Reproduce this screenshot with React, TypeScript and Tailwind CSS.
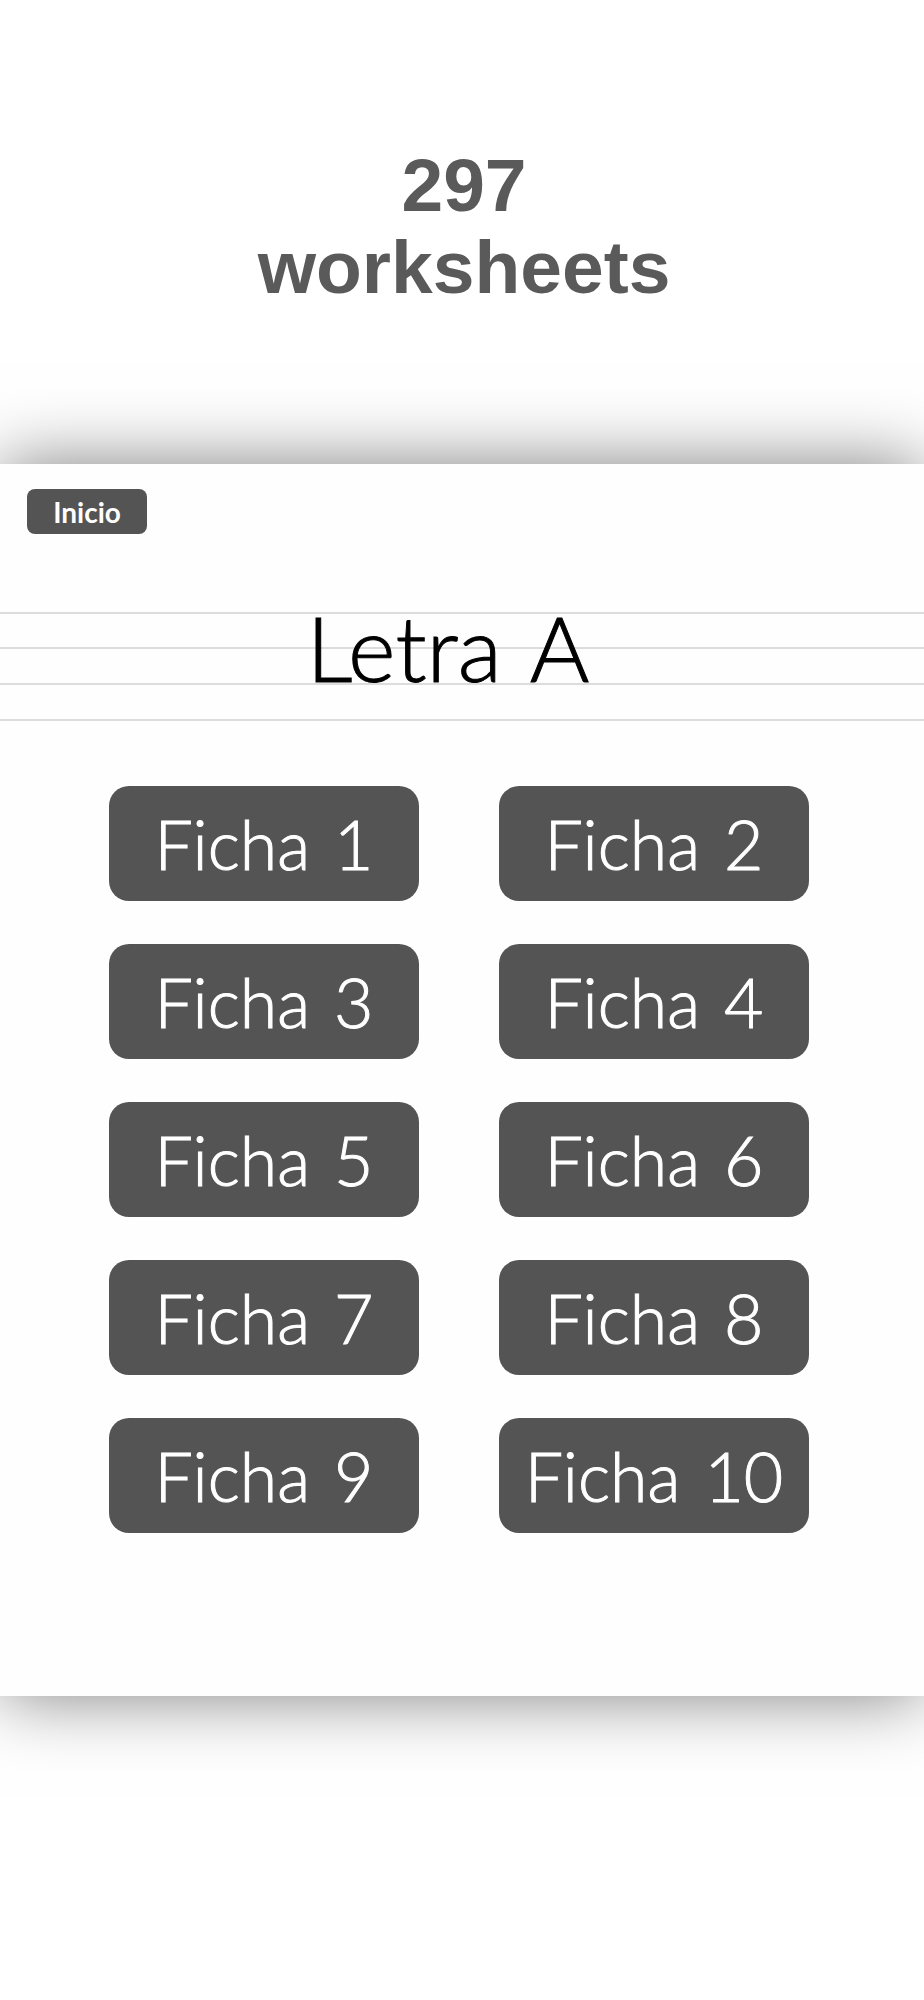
const WORKSHEETS = Array.from({ length: 10 }, (_, i) => i + 1);

function WorksheetLink({ number }: { number: number }) {
  return (
    <a
      href={`#ficha-${number}`}
      className="flex h-[115px] items-center justify-center gap-6 rounded-[20px] bg-[#545454] text-[68px] leading-none font-light text-white [-webkit-text-stroke:1px_white]"
    >
      <span>Ficha</span>
      <span>{number}</span>
    </a>
  );
}

export default function App() {
  return (
    <div className="min-h-screen overflow-hidden bg-white">
      <header className="pt-36 pb-[156px] pl-1 text-center font-['Liberation_Sans',sans-serif] text-[75px] leading-[82px] font-bold text-[#5a5a5a]">
        <h1>
          297
          <br />
          worksheets
        </h1>
      </header>

      <main className="bg-[#fefefe] pb-[163px] font-[Lato,sans-serif] shadow-[0_0_68px_rgba(0,0,0,0.5)]">
        <nav className="px-[27px] pt-[25px]">
          <a
            href="#inicio"
            className="flex h-[45px] w-[120px] items-center justify-center rounded-lg bg-[#545454] text-[28px] leading-none font-bold text-white"
          >
            Inicio
          </a>
        </nav>

        {/* ruled writing lines behind the title */}
        <div className="relative mt-[78px]">
          <div className="border-t-2 border-[#dcdcdc]">
            <div className="h-[35px] border-b-2 border-[#dcdcdc]" />
            <div className="h-9 border-b-2 border-[#dcdcdc]" />
            <div className="h-9 border-b-2 border-[#dcdcdc]" />
          </div>
          <h2 className="absolute inset-x-0 top-0 flex justify-center gap-7 pr-7 text-[91px] leading-[70px] font-light text-black [-webkit-text-stroke:1px_black]">
            <span>Letra</span>
            <span>A</span>
          </h2>
        </div>

        <div className="mt-[65px] grid grid-cols-2 gap-x-20 gap-y-[43px] pr-[115px] pl-[109px]">
          {WORKSHEETS.map((number) => (
            <WorksheetLink key={number} number={number} />
          ))}
        </div>
      </main>
    </div>
  );
}
